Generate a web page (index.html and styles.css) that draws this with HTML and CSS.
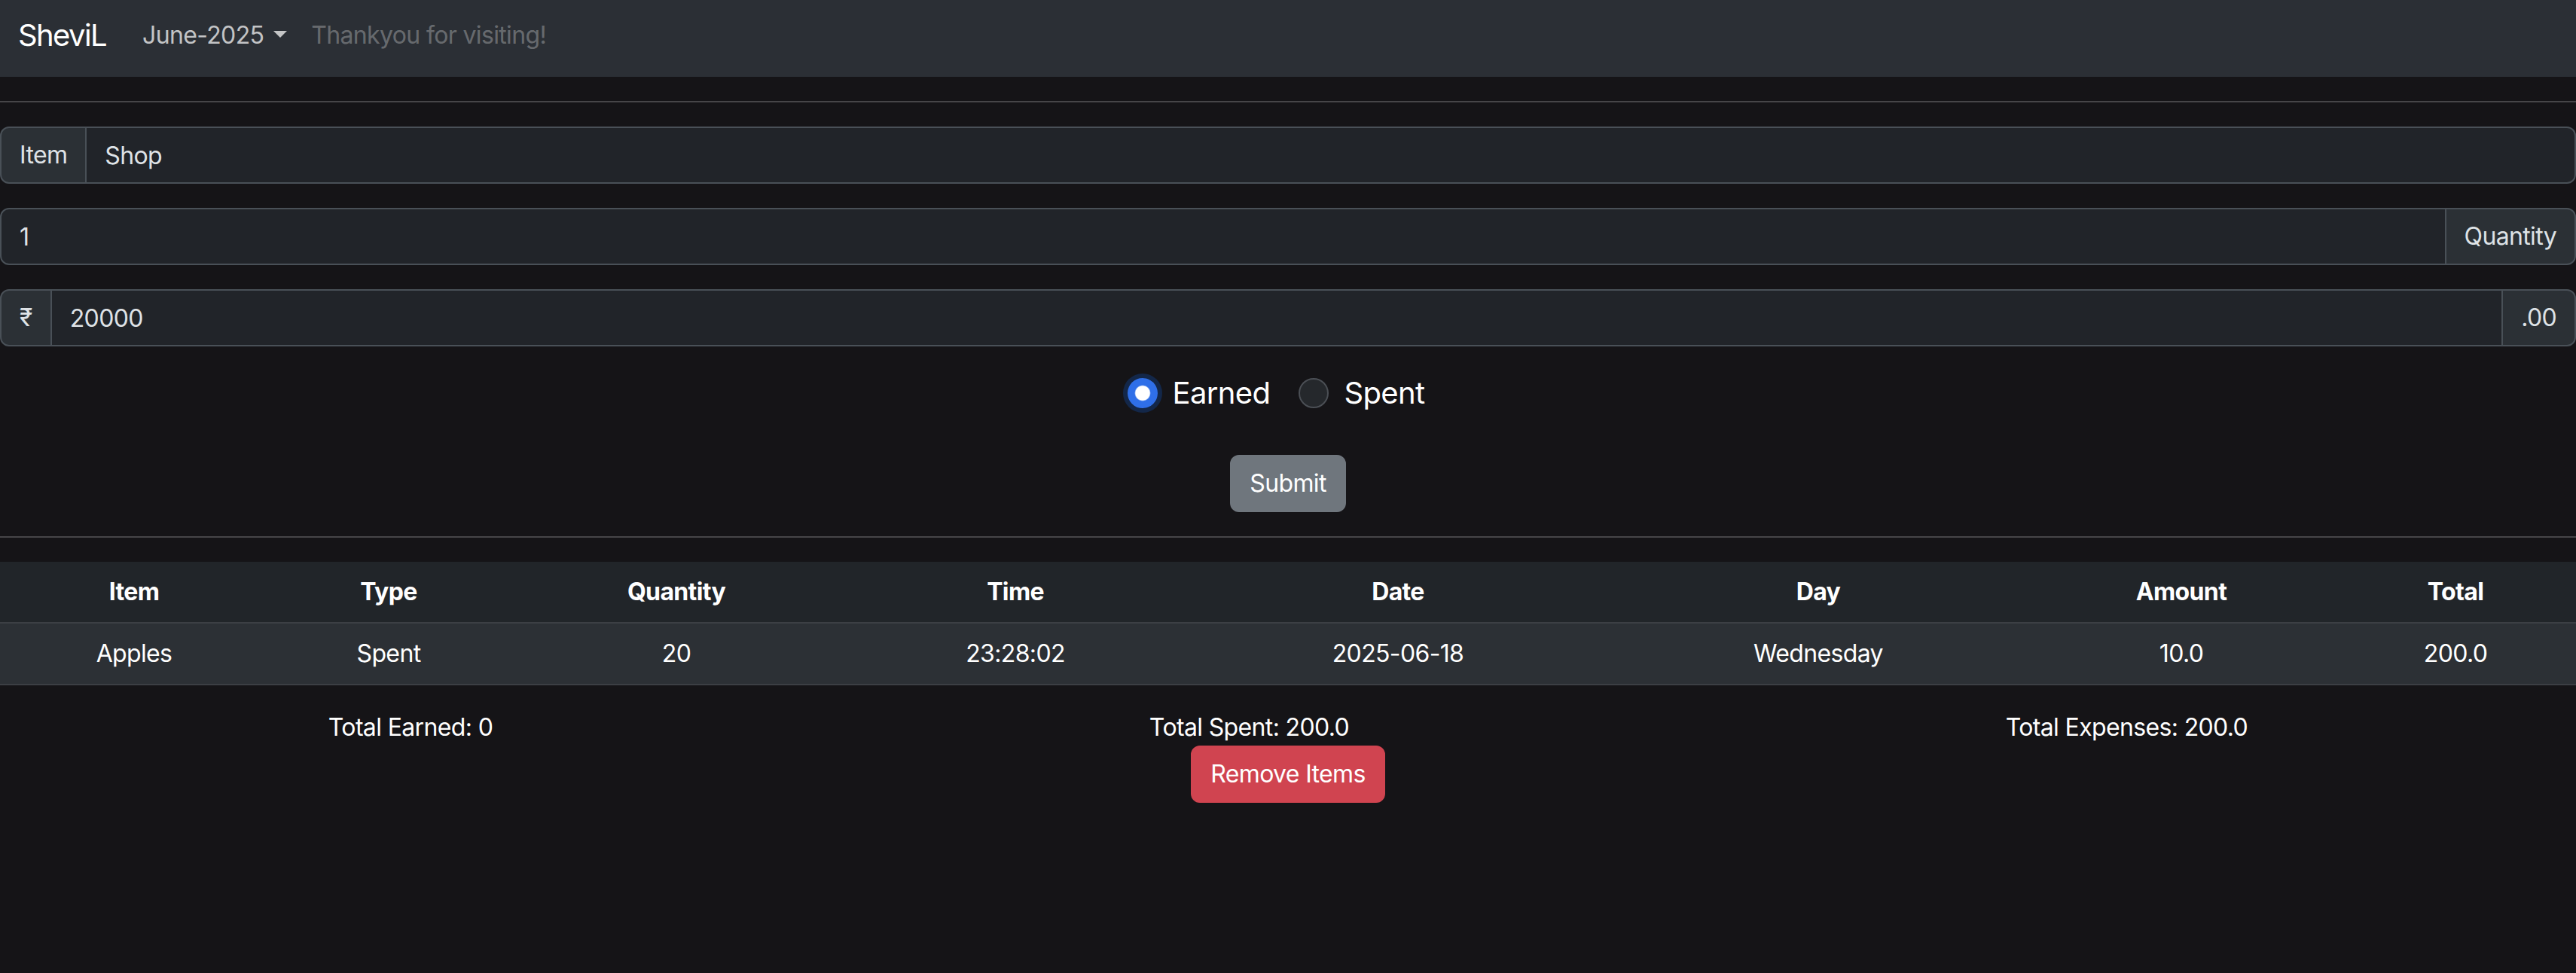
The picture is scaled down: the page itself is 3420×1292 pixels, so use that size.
FILE: index.html
```html
<!DOCTYPE html>
<html lang="en">
<head>
<meta charset="utf-8">
<title>SheviL</title>
<link rel="stylesheet" href="styles.css">
</head>
<body>
<nav class="navbar">
  <a class="brand" href="#">SheviL</a>
  <ul class="nav">
    <li><a class="nav-link dropdown-toggle" href="#">June-2025</a></li>
    <li><span class="nav-link disabled">Thankyou for visiting!</span></li>
  </ul>
</nav>
<hr class="rule">
<form class="entry">
  <div class="input-group">
    <span class="addon">Item</span>
    <input class="field" type="text" value="Shop">
  </div>
  <div class="input-group">
    <input class="field" type="text" value="1">
    <span class="addon">Quantity</span>
  </div>
  <div class="input-group">
    <span class="addon">₹</span>
    <input class="field" type="text" value="20000">
    <span class="addon">.00</span>
  </div>
  <div class="radios">
    <label class="check"><input class="radio" type="radio" name="kind" checked><span class="check-label">Earned</span></label>
    <label class="check"><input class="radio" type="radio" name="kind"><span class="check-label">Spent</span></label>
  </div>
  <div class="center-row">
    <button class="btn btn-secondary" type="button">Submit</button>
  </div>
</form>
<hr class="rule">
<table class="ledger">
  <thead>
    <tr><th>Item</th><th>Type</th><th>Quantity</th><th>Time</th><th>Date</th><th>Day</th><th>Amount</th><th>Total</th></tr>
  </thead>
  <tbody>
    <tr><td>Apples</td><td>Spent</td><td>20</td><td>23:28:02</td><td>2025-06-18</td><td>Wednesday</td><td>10.0</td><td>200.0</td></tr>
  </tbody>
</table>
<div class="totals">
  <span>Total Earned: 0</span>
  <span>Total Spent: 200.0</span>
  <span>Total Expenses: 200.0</span>
</div>
<div class="center-row">
  <button class="btn btn-danger" type="button">Remove Items</button>
</div>
</body>
</html>
```
FILE: styles.css
```css
html {
  zoom: 2;
  background: #151417;
}
body {
  margin: 0;
  background: #151417;
  color: #dee2e6;
  font-family: Inter, "Noto Sans", "Liberation Sans", sans-serif;
  font-size: 16px;
  line-height: 24px;
  letter-spacing: -0.02em;
  min-height: 646px;
}
a { text-decoration: none; }

/* navbar */
.navbar {
  display: flex;
  align-items: flex-start;
  height: 51px;
  box-sizing: border-box;
  padding: 3.5px 12px 0;
  background: #2b2f35;
}
.brand {
  color: #fff;
  font-size: 20px;
  line-height: 30px;
  letter-spacing: -0.04em;
  padding: 5px 0;
  margin-right: 16px;
}
.nav {
  display: flex;
  list-style: none;
  margin: 0;
  padding: 0;
}
.nav-link {
  display: block;
  padding: 8px;
  color: rgba(255, 255, 255, 0.72);
}
.nav-link.disabled { color: rgba(255, 255, 255, 0.3); }
.dropdown-toggle::after {
  content: "";
  display: inline-block;
  margin-left: 0.4em;
  vertical-align: 0.255em;
  border-top: 0.3em solid;
  border-left: 0.3em solid transparent;
  border-right: 0.3em solid transparent;
}

.rule {
  margin: 16px 0;
  border: 0;
  border-top: 1px solid #464548;
}

/* form */
.entry { margin: 0; }
.input-group {
  display: flex;
  margin-bottom: 16px;
}
.addon, .field {
  box-sizing: border-box;
  height: 38px;
  padding: 6px 12px;
  font: inherit;
  letter-spacing: inherit;
  color: #dee2e6;
  border: 1px solid #495057;
}
.addon {
  background: #2b3035;
  white-space: nowrap;
}
.field {
  flex: 1;
  min-width: 0;
  background: #212429;
  outline: none;
}
.input-group > * + * { margin-left: -1px; }
.input-group > :first-child { border-radius: 6px 0 0 6px; }
.input-group > :last-child { border-radius: 0 6px 6px 0; }

.radios {
  display: flex;
  justify-content: center;
  gap: 3px;
  font-size: 20px;
  line-height: 30px;
  color: #fff;
  margin-bottom: 26px;
}
.check {
  display: flex;
  align-items: center;
  margin-right: 16px;
}
.radio {
  appearance: none;
  -webkit-appearance: none;
  margin: 0 10px 0 0;
  width: 20px;
  height: 20px;
  border-radius: 50%;
  border: 1px solid #4b4f55;
  background: #25282c;
}
.radio:checked {
  border-color: #2f6fe8;
  background: radial-gradient(circle, #fff 0 4.6px, #2f6fe8 5.4px);
  box-shadow: 0 0 0 3px rgba(13, 110, 253, 0.22);
}

.center-row {
  display: flex;
  justify-content: center;
}
.btn {
  font: inherit;
  letter-spacing: inherit;
  color: #fff;
  padding: 6px 12px;
  line-height: 24px;
  border: 1px solid transparent;
  border-radius: 6px;
}
.btn-secondary { background: #6f767d; border-color: #6f767d; }
.btn-danger { background: #d04450; border-color: #d04450; }

/* table */
.ledger {
  width: 100%;
  table-layout: fixed;
  border-collapse: collapse;
  color: #fff;
  text-align: center;
  margin-bottom: 16px;
}
.ledger th, .ledger td {
  padding: 8px;
  border-bottom: 1px solid #3c3f44;
}
.ledger th { background: #212529; font-weight: 700; }
.ledger td { background: #2c3035; }
.ledger th:nth-child(1) { width: 162px; }
.ledger th:nth-child(2) { width: 144px; }
.ledger th:nth-child(3) { width: 206px; }
.ledger th:nth-child(4) { width: 212px; }
.ledger th:nth-child(5) { width: 264px; }
.ledger th:nth-child(6) { width: 262px; }
.ledger th:nth-child(7) { width: 188px; }
.ledger th:nth-child(8) { width: 144px; }

.totals {
  display: flex;
  justify-content: space-around;
  color: #fff;
}
```
